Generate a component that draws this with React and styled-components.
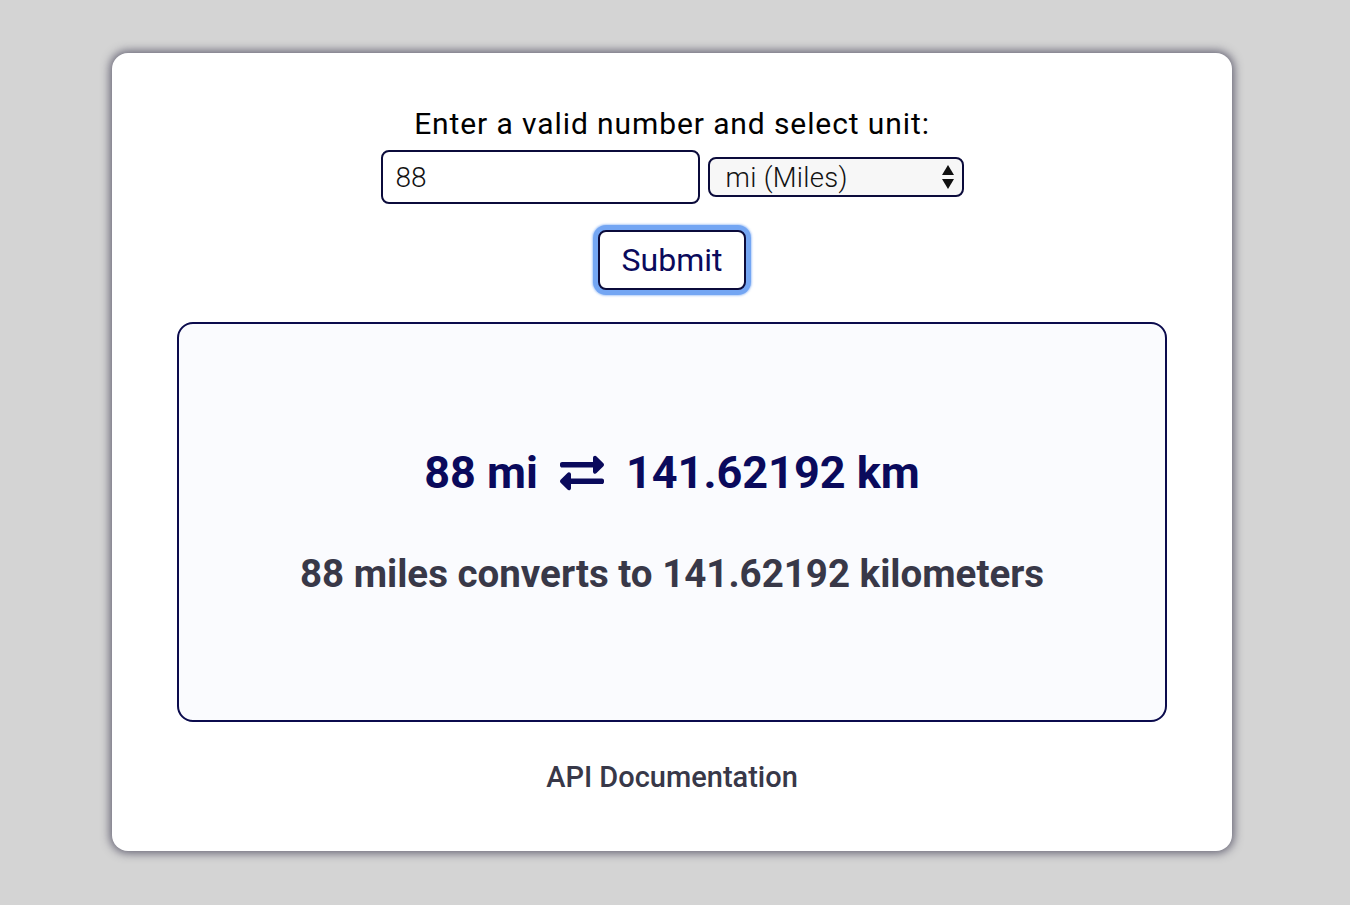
import React, { useState } from "react";
import styled, { createGlobalStyle } from "styled-components";
import { FaExchangeAlt } from "react-icons/fa";

const GlobalStyle = createGlobalStyle`
  html, body {
    margin: 0;
    padding: 0;
    background: #d4d4d4;
    font-family: Roboto, "Liberation Sans", sans-serif;
  }
`;

const Page = styled.div`
  padding: 53px 0 54px 112px;
`;

const Card = styled.div`
  width: 1120px;
  height: 798px;
  box-sizing: border-box;
  background: #ffffff;
  border-radius: 16px;
  box-shadow: 0 0 10px 2px rgba(60, 58, 80, 0.75);
  display: flex;
  flex-direction: column;
  align-items: center;
  padding-top: 51px;
`;

const Label = styled.label`
  font-size: 30px;
  letter-spacing: 0.9px;
  line-height: 40px;
  color: #000;
  margin-bottom: 6px;
`;

const Row = styled.div`
  display: flex;
  align-items: center;
  gap: 8px;
`;

const NumberInput = styled.input`
  width: 319px;
  height: 54px;
  box-sizing: border-box;
  border: 2px solid #0b0b3b;
  border-radius: 8px;
  padding: 0 13px;
  font-family: Roboto, "Liberation Sans", sans-serif;
  font-size: 28px;
  font-weight: 300;
  color: #111;
  outline: none;
`;

const SelectWrap = styled.div`
  position: relative;
  width: 256px;
  height: 40px;
`;

const Select = styled.select`
  appearance: none;
  width: 100%;
  height: 100%;
  box-sizing: border-box;
  border: 2px solid #0b0b3b;
  border-radius: 8px;
  background: #f7f7f7;
  padding: 0 16px;
  font-family: Roboto, "Liberation Sans", sans-serif;
  font-size: 27.5px;
  font-weight: 300;
  letter-spacing: 0.3px;
  color: #111;
  outline: none;
`;

const Arrows = styled.svg`
  position: absolute;
  right: 9px;
  top: 7px;
  pointer-events: none;
`;

const SubmitButton = styled.button`
  margin-top: 26px;
  width: 148px;
  height: 60px;
  box-sizing: border-box;
  background: #fff;
  border: 2px solid #0b0b3b;
  border-radius: 8px;
  font-family: Roboto, "Liberation Sans", sans-serif;
  font-size: 32px;
  color: #0a0a5c;
  outline: none;
  box-shadow: 0 0 0 5px #74a6f3, 0 0 2px 6px rgba(116, 166, 243, 0.55);
  cursor: pointer;
`;

const Result = styled.div`
  margin-top: 32px;
  width: 990px;
  height: 400px;
  box-sizing: border-box;
  border: 2px solid #0b0b4d;
  border-radius: 16px;
  background: #fafbfe;
  display: flex;
  flex-direction: column;
  align-items: center;
  padding-top: 123px;
`;

const Headline = styled.div`
  display: flex;
  align-items: center;
  gap: 22px;
  font-size: 45px;
  font-weight: 700;
  color: #0a0a5c;
  line-height: 52px;
`;

const Sentence = styled.div`
  margin-top: 53px;
  font-size: 38.5px;
  font-weight: 700;
  color: #383848;
  line-height: 44px;
`;

const DocLink = styled.a`
  margin-top: 38px;
  font-size: 29px;
  font-weight: 500;
  color: #383848;
  text-decoration: none;
`;

export default function App() {
  const [value, setValue] = useState("88");
  const [unit, setUnit] = useState("mi");

  return (
    <Page>
      <GlobalStyle />
      <Card>
        <Label htmlFor="num">Enter a valid number and select unit:</Label>
        <Row>
          <NumberInput id="num" value={value} onChange={(e) => setValue(e.target.value)} />
          <SelectWrap>
            <Select value={unit} onChange={(e) => setUnit(e.target.value)}>
              <option value="mi">mi (Miles)</option>
              <option value="km">km (Kilometers)</option>
            </Select>
            <Arrows width="14" height="26" viewBox="0 0 14 26">
              <path d="M7 1 L13 11 L1 11 Z" fill="#111" />
              <path d="M1 15 L13 15 L7 25 Z" fill="#111" />
            </Arrows>
          </SelectWrap>
        </Row>
        <SubmitButton>Submit</SubmitButton>
        <Result>
          <Headline>
            <span>88 mi</span>
            <FaExchangeAlt size={44} />
            <span>141.62192 km</span>
          </Headline>
          <Sentence>88 miles converts to 141.62192 kilometers</Sentence>
        </Result>
        <DocLink href="#">API Documentation</DocLink>
      </Card>
    </Page>
  );
}
